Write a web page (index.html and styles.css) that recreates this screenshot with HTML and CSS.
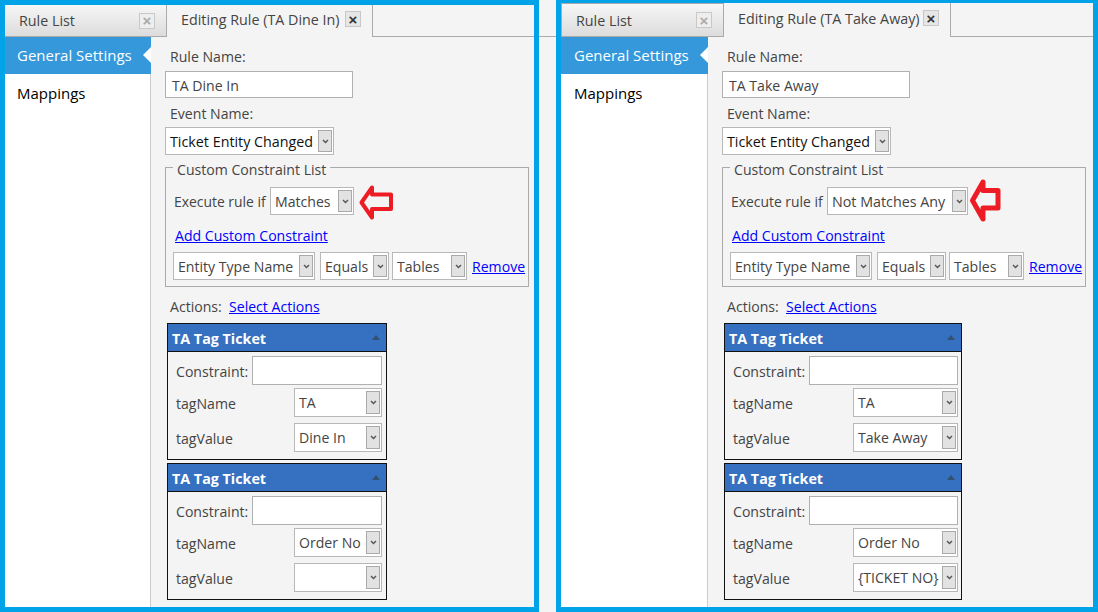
FILE: index.html
```html
<!DOCTYPE html>
<html lang="en">
<head>
<meta charset="utf-8">
<title>Rule editor comparison</title>
<link rel="stylesheet" href="styles.css">
</head>
<body>
<div class="page">
  <section class="panel panel-left">
    <div class="tabs">
      <div class="tab tab-idle tab-idle-left"><span class="tab-name">Rule List</span><span class="close close-dim">×</span></div>
      <div class="tab tab-active tab-active-left"><span class="tab-name">Editing Rule (TA Dine In)</span><span class="close">×</span></div>
    </div>
    <div class="main">
      <nav class="side">
        <div class="side-item side-current">General Settings</div>
        <div class="side-item">Mappings</div>
      </nav>
      <div class="content">
        <div class="label">Rule Name:</div>
        <div class="input input-name">TA Dine In</div>
        <div class="label label-event">Event Name:</div>
        <div class="select select-event"><span class="val">Ticket Entity Changed</span><span class="btn"><svg width="7" height="5" viewBox="0 0 7 5"><path d="M1 1l2.500 2.500L6 1" fill="none" stroke="#555" stroke-width="1.400"/></svg></span></div>
        <div class="group">
          <div class="legend">Custom Constraint List</div>
          <div class="exec">
            <span class="exec-label">Execute rule if</span>
            <div class="select select-match-l"><span class="val">Matches</span><span class="btn"><svg width="7" height="5" viewBox="0 0 7 5"><path d="M1 1l2.500 2.500L6 1" fill="none" stroke="#555" stroke-width="1.400"/></svg></span></div>
            <svg class="red-arrow red-arrow-l" width="36" height="37" viewBox="0 0 36 37"><path d="M3.500 18.500L14 3.500V10.500H33V25H14V33.500Z" fill="#f4f4f4" stroke="#ed1c24" stroke-width="4" stroke-linejoin="round"/></svg>
          </div>
          <a class="link add-link" href="#">Add Custom Constraint</a>
          <div class="cons">
            <div class="select select-type"><span class="val">Entity Type Name</span><span class="btn"><svg width="7" height="5" viewBox="0 0 7 5"><path d="M1 1l2.500 2.500L6 1" fill="none" stroke="#555" stroke-width="1.400"/></svg></span></div>
            <div class="select select-eq"><span class="val">Equals</span><span class="btn"><svg width="7" height="5" viewBox="0 0 7 5"><path d="M1 1l2.500 2.500L6 1" fill="none" stroke="#555" stroke-width="1.400"/></svg></span></div>
            <div class="select select-tables"><span class="val">Tables</span><span class="btn"><svg width="7" height="5" viewBox="0 0 7 5"><path d="M1 1l2.500 2.500L6 1" fill="none" stroke="#555" stroke-width="1.400"/></svg></span></div>
            <a class="link" href="#">Remove</a>
          </div>
        </div>
        <div class="actions"><span class="actions-label">Actions:</span><a class="link" href="#">Select Actions</a></div>
        <div class="card">
          <div class="card-head"><span>TA Tag Ticket</span><i class="tri"></i></div>
          <div class="card-body">
            <div class="row row-c"><span class="key">Constraint:</span><div class="input input-c"></div></div>
            <div class="row row-n"><span class="key">tagName</span><div class="select select-tag"><span class="val">TA</span><span class="btn"><svg width="7" height="5" viewBox="0 0 7 5"><path d="M1 1l2.500 2.500L6 1" fill="none" stroke="#555" stroke-width="1.400"/></svg></span></div></div>
            <div class="row row-v"><span class="key">tagValue</span><div class="select select-tag"><span class="val">Dine In</span><span class="btn"><svg width="7" height="5" viewBox="0 0 7 5"><path d="M1 1l2.500 2.500L6 1" fill="none" stroke="#555" stroke-width="1.400"/></svg></span></div></div>
          </div>
        </div>
        <div class="card">
          <div class="card-head"><span>TA Tag Ticket</span><i class="tri"></i></div>
          <div class="card-body">
            <div class="row row-c"><span class="key">Constraint:</span><div class="input input-c"></div></div>
            <div class="row row-n"><span class="key">tagName</span><div class="select select-tag"><span class="val">Order No</span><span class="btn"><svg width="7" height="5" viewBox="0 0 7 5"><path d="M1 1l2.500 2.500L6 1" fill="none" stroke="#555" stroke-width="1.400"/></svg></span></div></div>
            <div class="row row-v"><span class="key">tagValue</span><div class="select select-tag"><span class="val"></span><span class="btn"><svg width="7" height="5" viewBox="0 0 7 5"><path d="M1 1l2.500 2.500L6 1" fill="none" stroke="#555" stroke-width="1.400"/></svg></span></div></div>
          </div>
        </div>
      </div>
    </div>
  </section>
  <div class="gutter"></div>
  <section class="panel panel-right">
    <div class="tabs">
      <div class="tab tab-idle tab-idle-right"><span class="tab-name">Rule List</span><span class="close close-dim">×</span></div>
      <div class="tab tab-active tab-active-right"><span class="tab-name">Editing Rule (TA Take Away)</span><span class="close">×</span></div>
    </div>
    <div class="main">
      <nav class="side">
        <div class="side-item side-current">General Settings</div>
        <div class="side-item">Mappings</div>
      </nav>
      <div class="content">
        <div class="label">Rule Name:</div>
        <div class="input input-name">TA Take Away</div>
        <div class="label label-event">Event Name:</div>
        <div class="select select-event"><span class="val">Ticket Entity Changed</span><span class="btn"><svg width="7" height="5" viewBox="0 0 7 5"><path d="M1 1l2.500 2.500L6 1" fill="none" stroke="#555" stroke-width="1.400"/></svg></span></div>
        <div class="group">
          <div class="legend">Custom Constraint List</div>
          <div class="exec">
            <span class="exec-label">Execute rule if</span>
            <div class="select select-match-r"><span class="val">Not Matches Any</span><span class="btn"><svg width="7" height="5" viewBox="0 0 7 5"><path d="M1 1l2.500 2.500L6 1" fill="none" stroke="#555" stroke-width="1.400"/></svg></span></div>
            <svg class="red-arrow red-arrow-r" width="32" height="46" viewBox="0 0 32 46"><path d="M3.500 22.500L14 4V12.500H29V30H14V41Z" fill="#f4f4f4" stroke="#ed1c24" stroke-width="5" stroke-linejoin="round"/></svg>
          </div>
          <a class="link add-link" href="#">Add Custom Constraint</a>
          <div class="cons">
            <div class="select select-type"><span class="val">Entity Type Name</span><span class="btn"><svg width="7" height="5" viewBox="0 0 7 5"><path d="M1 1l2.500 2.500L6 1" fill="none" stroke="#555" stroke-width="1.400"/></svg></span></div>
            <div class="select select-eq"><span class="val">Equals</span><span class="btn"><svg width="7" height="5" viewBox="0 0 7 5"><path d="M1 1l2.500 2.500L6 1" fill="none" stroke="#555" stroke-width="1.400"/></svg></span></div>
            <div class="select select-tables"><span class="val">Tables</span><span class="btn"><svg width="7" height="5" viewBox="0 0 7 5"><path d="M1 1l2.500 2.500L6 1" fill="none" stroke="#555" stroke-width="1.400"/></svg></span></div>
            <a class="link" href="#">Remove</a>
          </div>
        </div>
        <div class="actions"><span class="actions-label">Actions:</span><a class="link" href="#">Select Actions</a></div>
        <div class="card">
          <div class="card-head"><span>TA Tag Ticket</span><i class="tri"></i></div>
          <div class="card-body">
            <div class="row row-c"><span class="key">Constraint:</span><div class="input input-c"></div></div>
            <div class="row row-n"><span class="key">tagName</span><div class="select select-tag"><span class="val">TA</span><span class="btn"><svg width="7" height="5" viewBox="0 0 7 5"><path d="M1 1l2.500 2.500L6 1" fill="none" stroke="#555" stroke-width="1.400"/></svg></span></div></div>
            <div class="row row-v"><span class="key">tagValue</span><div class="select select-tag"><span class="val">Take Away</span><span class="btn"><svg width="7" height="5" viewBox="0 0 7 5"><path d="M1 1l2.500 2.500L6 1" fill="none" stroke="#555" stroke-width="1.400"/></svg></span></div></div>
          </div>
        </div>
        <div class="card">
          <div class="card-head"><span>TA Tag Ticket</span><i class="tri"></i></div>
          <div class="card-body">
            <div class="row row-c"><span class="key">Constraint:</span><div class="input input-c"></div></div>
            <div class="row row-n"><span class="key">tagName</span><div class="select select-tag"><span class="val">Order No</span><span class="btn"><svg width="7" height="5" viewBox="0 0 7 5"><path d="M1 1l2.500 2.500L6 1" fill="none" stroke="#555" stroke-width="1.400"/></svg></span></div></div>
            <div class="row row-v"><span class="key">tagValue</span><div class="select select-tag"><span class="val">{TICKET NO}</span><span class="btn"><svg width="7" height="5" viewBox="0 0 7 5"><path d="M1 1l2.500 2.500L6 1" fill="none" stroke="#555" stroke-width="1.400"/></svg></span></div></div>
          </div>
        </div>
      </div>
    </div>
  </section>
</div>
</body>
</html>
```
FILE: styles.css
```css
* { box-sizing: border-box; }
html, body { margin: 0; height: 100%; overflow: hidden; background: #f4f4f4; }
body { font-family: "Open Sans", "Noto Sans", sans-serif; font-size: 14.100px; color: #444; }
.page { display: flex; width: 1098px; height: 612px; }
.panel { display: flex; flex-direction: column; height: 612px; border: solid #00a2e8; background: #f4f4f4; }
.panel-left { width: 539px; border-width: 5px; }
.panel-right { width: 542px; border-width: 3px 5px 5px 5px; }
.gutter { width: 17px; height: 37px; border-bottom: 1px solid #aaa; }
.tabs { display: flex; flex: none; border-bottom: 1px solid #aaa; font-size: 14.300px; }
.panel-left .tabs { height: 32px; }
.panel-right .tabs { height: 34px; }
.tab { display: flex; align-items: center; }
.tab-idle { background: linear-gradient(#f6f6f6, #dcdcdc); border: 1px solid #aaa; border-bottom: 0; }
.tab-idle-left { width: 162px; padding: 0 11px 0 14px; border-width: 0 1px 0 0; }
.tab-idle-right { width: 163px; padding: 0 11px 0 14px; }
.tab-active { background: #f4f4f4; border-right: 1px solid #aaa; margin-bottom: -1px; padding-bottom: 4px; }
.tab-active-left { width: 206px; padding-left: 14px; }
.tab-active-right { width: 227px; padding-left: 14px; }
.tab-name { flex: 1; white-space: nowrap; }
.close { flex: none; display: flex; align-items: center; justify-content: center; width: 16px; height: 16px; border: 1px solid #c8c8c8; background: #e6e6e6; color: #333; font: bold 15px/1 "Liberation Sans", sans-serif; }
.tab-active .close { margin-right: 11px; }
.close-dim { color: #aaa; background: #eee; }
.main { flex: 1; display: flex; min-height: 0; }
.side { flex: none; width: 146px; background: #fff; border-right: 1px solid #ccc; }
.panel-right .side { width: 147px; }
.side-item { height: 37px; padding-left: 12px; line-height: 38px; color: #000; font-size: 15px; white-space: nowrap; }
.panel-right .side-item { padding-left: 13px; }
.side-current { position: relative; background: #3498db; color: #fff; margin-right: -1px; line-height: 36px; }
.side-current::after { content: ""; position: absolute; right: 0; top: 10px; border: 8px solid transparent; border-right-color: #fff; border-left-width: 0; }
.content { flex: 1; padding: 8px 0 0 14px; }
.label { height: 26px; padding-left: 5px; line-height: 24px; }
.label-event { height: 29px; line-height: 31px; }
.input { border: 1px solid #b0b0b0; background: #fff; }
.input-name { width: 188px; height: 27px; padding-left: 6px; line-height: 27px; }
.select { display: flex; align-items: stretch; height: 28px; border: 1px solid #b8b8b8; background: #fff; padding: 2px 1px 2px 0; }
.val { flex: 1; min-width: 0; padding-left: 4px; line-height: 23px; white-space: nowrap; overflow: hidden; }
.btn { flex: none; width: 14px; display: flex; align-items: center; justify-content: center; background: #e2e2e2; border: 1px solid #aaa; }
.select-event { width: 169px; margin-bottom: 12px; color: #111; font-size: 14.300px; }
.group { position: relative; width: 364px; height: 120px; border: 1px solid #aaa; padding: 19px 0 0 8px; }
.legend { position: absolute; left: 7px; top: -8px; padding: 0 4px; background: #f4f4f4; line-height: 19px; }
.exec { display: flex; align-items: center; height: 28px; }
.exec-label { width: 96px; padding-top: 1px; white-space: nowrap; font-size: 13.900px; }
.select-match-l { width: 84px; }
.select-match-r { width: 141px; font-size: 14.300px; }
.red-arrow { flex: none; margin-top: 2px; }
.red-arrow-l { margin-left: 4px; }
.red-arrow-r { margin-left: 1px; margin-bottom: -9px; margin-top: -9px; }
.add-link { display: block; margin: 9px 0 0 1px; line-height: 24px; height: 24px; }
.cons { display: flex; align-items: center; height: 28px; margin: 4px 0 0 -1px; }
.cons .select { margin-right: 5px; }
.select-type { width: 142px; }
.cons .select-eq { width: 69px; margin-right: 3px; }
.select-tables { width: 75px; }
.link { color: #00f; text-decoration: underline; }
.actions { display: flex; height: 36px; align-items: center; padding: 3px 0 0 5px; }
.actions-label { width: 59px; }
.card { width: 220px; height: 137px; margin: 0 0 3px 2px; border: 1px solid #111; }
.panel-right .card { width: 238px; }
.card-head { display: flex; align-items: center; justify-content: space-between; height: 28px; padding: 1px 5px 0 4px; background: #3670c0; color: #fff; font-weight: 700; font-size: 14.300px; border-bottom: 1px solid #111; }
.tri { margin: -2px 1px 0 0; border: 4px solid transparent; border-bottom: 5px solid #35506f; border-top: 0; }
.card-body { padding: 4px 4px 0 8px; }
.panel-right .card-body { padding-right: 3px; }
.row { display: flex; align-items: center; justify-content: space-between; }
.key { padding-top: 1px; }
.row-c { height: 29px; }
.row-n { height: 29px; margin-top: 3px; }
.row-v { height: 29px; margin-top: 6px; }
.input-c { width: 130px; height: 29px; }
.panel-right .input-c { width: 149px; }
.select-tag { width: 88px; height: 29px; }
.panel-right .select-tag { width: 105px; }
```
